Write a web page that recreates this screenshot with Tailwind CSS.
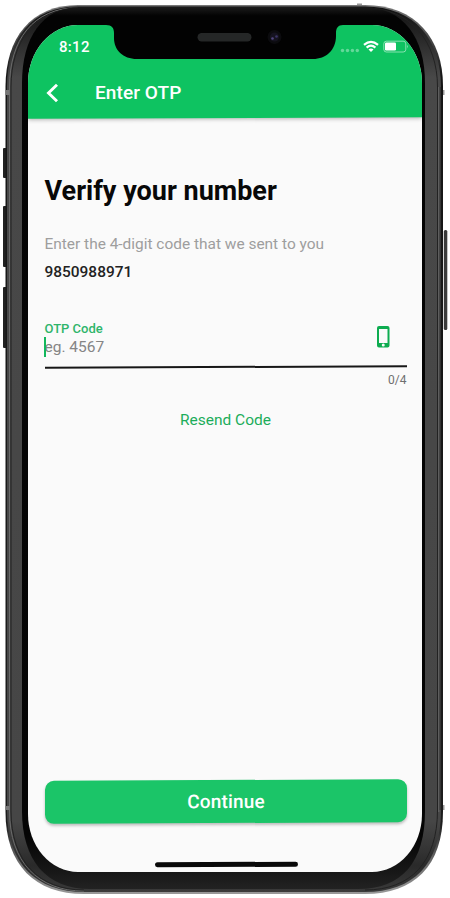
<!DOCTYPE html>
<html lang="en">
<head>
<meta charset="utf-8">
<meta name="viewport" content="width=device-width, initial-scale=1">
<title>Enter OTP</title>
<script src="https://cdn.jsdelivr.net/npm/@tailwindcss/browser@4"></script>
</head>
<body class="relative w-[450px] h-[898px] overflow-hidden bg-white font-[Roboto,sans-serif]">
<!-- device body -->
<svg class="absolute inset-0" width="450" height="898" viewBox="0 0 450 898" aria-hidden="true">
  <defs>
    <linearGradient id="frame" x1="0" y1="0" x2="0" y2="1">
      <stop offset="0" stop-color="#111"/><stop offset=".03" stop-color="#242424"/><stop offset=".08" stop-color="#484848"/><stop offset=".92" stop-color="#464646"/><stop offset=".97" stop-color="#2a2a2a"/><stop offset="1" stop-color="#3a3a3a"/>
    </linearGradient>
    <linearGradient id="rim" x1="0" y1="0" x2="0" y2="1">
      <stop offset="0" stop-color="#777"/><stop offset=".08" stop-color="#151515"/><stop offset=".92" stop-color="#1c1c1c"/><stop offset=".96" stop-color="#666"/><stop offset="1" stop-color="#999"/>
    </linearGradient>
    <linearGradient id="bezel" x1="0" y1="0" x2="0" y2="1">
      <stop offset="0" stop-color="#1c1c1c"/><stop offset=".01" stop-color="#030303"/><stop offset=".94" stop-color="#050505"/><stop offset=".98" stop-color="#171717"/><stop offset="1" stop-color="#222"/>
    </linearGradient>
  </defs>
  <g fill="#202020">
    <rect x="3" y="148" width="4" height="30" rx="1"/>
    <rect x="3" y="206" width="4" height="61" rx="1"/>
    <rect x="3" y="287" width="4" height="61" rx="1"/>
    <rect x="443.800" y="230" width="3.500" height="100" rx="1.500" fill="#3a3a3a"/>
  </g>
  <path fill="#999" d="M357 3.500h5v2h-5zM442 90h2.500v5H442zM442 805h2.500v5H442z"/>
  <path fill="url(#rim)" d="M78 5H365C416 5 443 39 443 86V812C443 866 414 894 365 894H84C35 894 5.500 865 5.500 812V87C5.500 38 31 5 78 5Z"/>
  <path fill="url(#frame)" d="M78 6.500H365C415 6.500 441 40 441 87V811C441 864 413 892 365 892H84C37 892 7 864 7 811V87C7 38 32 6.500 78 6.500Z"/>
  <path fill="none" stroke="#6a6a6a" stroke-width="1" d="M84 891C38 891 9.500 862 9.500 811V87C9.500 40 33 8 78 7.500"/>
  <path fill="none" stroke="#222" stroke-width="1" d="M84 890C39 890 11 861 11 811V87C11 42 34 9.500 78 8.500M365 8C411 8 437.500 42 437.500 87V810C437.500 862 411 890 365 890M440 87V810"/>
  <path fill="none" stroke="#696969" stroke-width="1" d="M438.800 87V812"/>
  <path fill="url(#bezel)" d="M80 7H362C404 7 425 38 425 83V811C425 862 402 889 358 889H90C46 889 22 860 22 811V83C22 38 42 7 80 7Z"/>
  <path fill="#777" d="M5.500 90h4v5h-4zM5.500 806h4v4h-4z"/>
</svg>

<!-- screen -->
<main class="relative ml-[28px] mt-[25px] w-[394px] h-[847px] overflow-hidden flex flex-col bg-[#fafafa] rounded-[50px/58px]">
  <header class="relative h-[93px] shrink-0 flex flex-col">
    <div class="absolute inset-x-0 -top-2 bottom-0 bg-[#0ec361] -skew-y-[0.22deg] shadow-[0_1px_4px_rgba(0,0,0,0.3)]"></div>
    <div class="relative h-[44px] flex items-center justify-between pl-[31px] pr-[13px]">
      <span class="text-[15px] leading-none font-medium text-white tracking-[0.3px]">8:12</span>
      <svg width="70" height="14" viewBox="0 0 70 14" aria-hidden="true">
        <g fill="#fff" fill-opacity=".36"><circle cx="3.500" cy="10.500" r="1.700"/><circle cx="8.500" cy="10.500" r="1.700"/><circle cx="13.400" cy="10.500" r="1.700"/><circle cx="18.300" cy="10.500" r="1.700"/></g>
        <g fill="none" stroke="#fff" stroke-width="2.200"><path d="M25 4.900Q32 -1.300 39 4.900"/><path d="M27.600 7.600Q32 3.800 36.400 7.600"/></g>
        <path fill="#fff" d="M29.500 9.400Q32 7.600 34.500 9.400L32 12Z"/>
        <rect x="44.800" y="1.200" width="22" height="10.800" rx="2.600" fill="none" stroke="#fff" stroke-opacity=".5"/>
        <rect x="46" y="2.500" width="11" height="8" rx="1.300" fill="#fff"/>
        <path fill="#fff" fill-opacity=".6" d="M68 4.800q1.500 1.800 0 3.600z"/>
      </svg>
    </div>
    <div class="relative h-[49px] flex items-center pl-[18px] pb-[2px]">
      <svg width="14" height="20" viewBox="0 0 14 20" fill="none" stroke="#fff" stroke-width="2.900" aria-label="Back"><path d="M11 1.800 2.500 10 11 18.200"/></svg>
      <h1 class="ml-[35px] text-[19px] leading-none font-medium text-white whitespace-nowrap tracking-[0.1px]">Enter OTP</h1>
    </div>
  </header>

  <section class="flex flex-col pl-[16.500px] pr-[15.500px] pt-[57px]">
    <h2 class="text-[27px] leading-[32px] font-bold text-[#080808] whitespace-nowrap">Verify your number</h2>
    <p class="mt-[27px] text-[15.450px] leading-[20px] text-[#9e9e9e] whitespace-nowrap">Enter the 4-digit code that we sent to you</p>
    <p class="mt-[8px] text-[15.450px] leading-[20px] font-medium text-[#222]">9850988971</p>
    <div class="mt-[40px] h-[44px] flex justify-between">
      <label class="flex flex-col">
        <span class="text-[13px] leading-[14px] font-medium text-[#2fb56b]">OTP Code</span>
        <span class="relative mt-[1px] text-[15.500px] leading-[20px] text-[#858585]"><i class="absolute -left-px top-0 w-[2px] h-[20px] bg-[#12b75c]"></i>eg. 4567</span>
      </label>
      <svg class="mr-[16px] mt-[4px]" width="15" height="22" viewBox="0 0 15 22" aria-hidden="true"><path fill="#0dac50" fill-rule="evenodd" d="M3 0H11.500Q13.500 0 13.500 2V19.500Q13.500 21.500 11.500 21.500H3Q1 21.500 1 19.500V2Q1 0 3 0ZM3 3V17H11.500V3ZM7.250 17.600A1.500 1.500 0 1 0 7.250 20.600 1.500 1.500 0 1 0 7.250 17.600Z"/></svg>
    </div>
    <div class="h-[2px] -mt-[0.500px] bg-[#171717] -skew-y-[0.25deg]"></div>
    <span class="mt-[5.500px] self-end text-[12px] leading-[14px] text-[#6f6f6f]">0/4</span>
    <button class="mt-[23px] self-center text-[15.500px] leading-[20px] text-[#1cad5a]">Resend Code</button>
  </section>

  <footer class="mt-auto flex flex-col items-center pb-[5px] pl-[2px]">
    <button class="w-[362px] h-[43px] rounded-[9px] bg-[#1bc568] -skew-y-[0.25deg] shadow-[0_2px_3px_rgba(0,0,0,0.25)] text-[19px] leading-none font-medium text-white tracking-[0.15px]">Continue</button>
    <div class="mt-[39px] ml-[1px] w-[143px] h-[5px] rounded-full bg-[#090909] -skew-y-[0.25deg]"></div>
  </footer>
</main>

<!-- notch -->
<svg class="absolute left-0 top-0" width="450" height="70" viewBox="0 0 450 70" aria-hidden="true">
  <path fill="#020202" d="M100 20H350V25H343C338 25 336 28 336 33V36C336 50 326 59 313 59H137C123 59 114 50 114 38V33C114 28 112 25 106 25H100Z"/>
  <rect x="197.500" y="33" width="54" height="8.500" rx="4.200" fill="#252727"/>
  <circle cx="274.500" cy="37" r="7" fill="#0b0b0e"/>
  <circle cx="274.500" cy="37" r="4.500" fill="#15131f"/>
  <circle cx="272.500" cy="38.500" r="1.300" fill="#514680"/><circle cx="276.500" cy="36.500" r="1.300" fill="#3b3465"/>
</svg>
</body>
</html>
